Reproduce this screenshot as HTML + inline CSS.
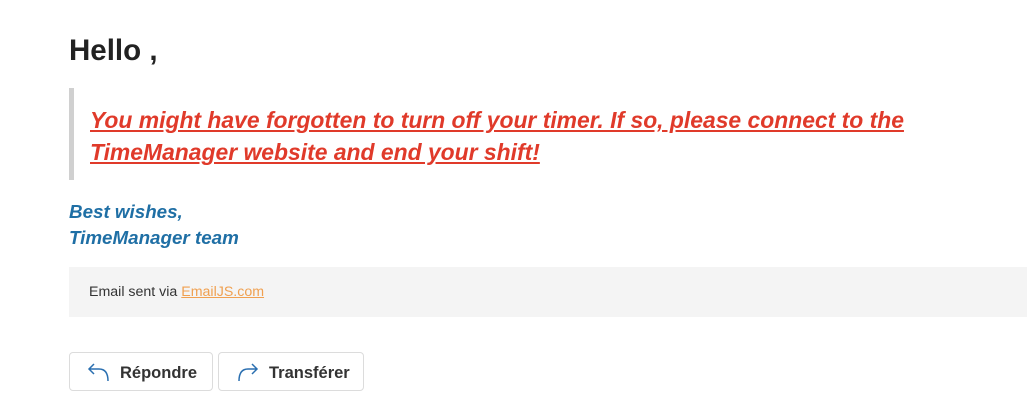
<!DOCTYPE html>
<html><head><meta charset="utf-8"><style>
body{margin:0;width:1027px;height:407px;background:#fff;font-family:"Liberation Sans",sans-serif;position:relative;overflow:hidden}
.a{position:absolute}
h1{position:absolute;left:69px;top:33px;margin:0;font-size:29.5px;font-weight:bold;color:#222;line-height:36px}
.bq{left:69px;top:88px;width:5px;height:92px;background:#d0d0d0}
.red{left:90px;top:104px;width:840px;font-size:22.9px;font-weight:bold;font-style:italic;color:#e03a2a;text-decoration:underline;line-height:32px}
.sig{left:69px;top:199px;font-size:18.8px;font-weight:bold;font-style:italic;color:#1f6fa5;line-height:26px}
.foot{left:69px;top:267px;width:958px;height:50px;background:#f4f4f4}
.foot span{position:absolute;left:20px;top:17px;font-size:14.2px;color:#333}
.foot a{color:#f0a050;text-decoration:underline}
.btn{top:352px;height:39px;border:1px solid #dcdcdc;border-radius:4px;box-sizing:border-box;font-size:16.5px;font-weight:bold;color:#333;line-height:41px}
.btn svg{position:absolute;left:17px;top:9px}
.btn b{position:absolute;left:50px}
</style></head><body>
<h1>Hello ,</h1>
<div class="a bq"></div>
<div class="a red">You might have forgotten to turn off your timer. If so, please connect to the TimeManager website and end your shift!</div>
<div class="a sig">Best wishes,<br>TimeManager team</div>
<div class="a foot"><span>Email sent via <a>EmailJS.com</a></span></div>
<div class="a btn" style="left:69px;width:144px"><svg width="24" height="22" viewBox="0 0 24 22"><path d="M7 2 L2 7 L7 12 M2 7 H12 C18 7 21 11 21 19" fill="none" stroke="#2a6fb0" stroke-width="1.5"/></svg><b>Répondre</b></div>
<div class="a btn" style="left:218px;width:146px"><svg width="24" height="22" viewBox="0 0 24 22"><path d="M16 2 L21 7 L16 12 M21 7 H12 C6 7 3 11 3 19" fill="none" stroke="#2a6fb0" stroke-width="1.5"/></svg><b>Transférer</b></div>
</body></html>
